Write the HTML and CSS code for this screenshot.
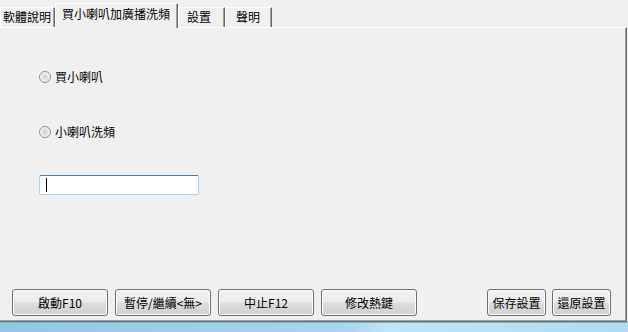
FILE: index.html
```html
<!DOCTYPE html>
<html lang="zh-Hant">
<head>
    <meta charset="UTF-8">
    <title>買小喇叭加廣播洗頻</title>
    <link rel="stylesheet" href="styles.css">
</head>
<body>
    <div class="window">
        <div class="tabs">
            <div class="tab tab-help">軟體說明</div>
            <div class="tab tab-main active">買小喇叭加廣播洗頻</div>
            <div class="tab tab-set">設置</div>
            <div class="tab tab-note">聲明</div>
        </div>
        <div class="panel">
            <div class="options">
                <label class="option"><span class="radio"></span>買小喇叭</label>
                <label class="option"><span class="radio"></span>小喇叭洗頻</label>
                <div class="textbox"><span class="caret"></span></div>
            </div>
            <div class="actions">
                <button class="btn wide">啟動F10</button>
                <button class="btn wide">暫停/繼續&lt;無&gt;</button>
                <button class="btn wide">中止F12</button>
                <button class="btn wide">修改熱鍵</button>
                <span class="spacer"></span>
                <button class="btn small">保存設置</button>
                <button class="btn small">還原設置</button>
            </div>
        </div>
        <div class="taskbar"></div>
    </div>
</body>
</html>
```

FILE: styles.css
```css
body {
    margin: 0;
    background: #f0f0f0;
    font-family: "Noto Sans CJK TC", "Liberation Sans", sans-serif;
    font-size: 12px;
    color: #000;
}
.window {
    width: 628px;
    height: 332px;
    display: flex;
    flex-direction: column;
    overflow: hidden;
}
.tabs {
    height: 27px;
    display: flex;
    align-items: flex-end;
}
.tab {
    box-sizing: border-box;
    height: 20px;
    line-height: 18px;
    border-top: 1px solid #fff;
    border-left: 1px solid #fff;
    border-right: 1px solid #696969;
    box-shadow: inset -1px 0 #a0a0a0;
    white-space: nowrap;
}
.tab.active {
    height: 25px;
    line-height: 20px;
    background: #f0f0f0;
    margin-bottom: -1px;
    position: relative;
}
.tab-help { width: 55px; padding-left: 2px; }
.tab-main { width: 123px; padding-left: 6px; }
.tab-set { width: 47px; padding-left: 8px; }
.tab-note { width: 47px; padding-left: 10px; }
.panel {
    box-sizing: border-box;
    width: 627px;
    height: 295px;
    border-top: 1px solid #fff;
    border-right: 1px solid #696969;
    border-bottom: 1px solid #696969;
    box-shadow: inset -1px -1px #a0a0a0;
    display: flex;
    flex-direction: column;
}
.options {
    padding: 42px 0 0 39px;
    display: flex;
    flex-direction: column;
    align-items: flex-start;
}
.option {
    display: flex;
    align-items: center;
    gap: 4px;
    height: 13px;
    line-height: 13px;
}
.option + .option {
    margin-top: 42px;
}
.radio {
    box-sizing: border-box;
    width: 12px;
    height: 12px;
    border: 1px solid #8e8f8f;
    border-radius: 50%;
    background: radial-gradient(circle, #cfcfcf 0, #e6e6e6 45%, #f6f6f6 80%);
    box-shadow: inset 0 0 0 1px #f4f4f4;
}
.textbox {
    box-sizing: border-box;
    margin-top: 37px;
    width: 160px;
    height: 20px;
    background: #fff;
    border: 1px solid #a9d1ef;
    border-top-color: #3c7fb1;
    border-radius: 2px;
    padding: 2px 0 0 6px;
}
.caret {
    display: block;
    width: 1px;
    height: 14px;
    background: #000;
}
.actions {
    margin-top: auto;
    padding: 0 15px 5px 12px;
    display: flex;
    gap: 7px;
}
.spacer {
    flex: 1;
}
.btn {
    box-sizing: border-box;
    height: 27px;
    padding: 0;
    font-family: inherit;
    font-size: 12px;
    color: #000;
    border: 1px solid #707070;
    border-radius: 3px;
    background: linear-gradient(#f2f2f2 0%, #ebebeb 48%, #dddddd 52%, #cfcfcf 100%);
    box-shadow: inset 0 0 0 1px #fcfcfc;
}
.btn.wide {
    width: 96px;
}
.btn.small {
    width: 59px;
}
.btn.small + .btn.small {
    margin-left: -1px;
}
.taskbar {
    flex: 1;
    background: linear-gradient(100deg, #8fc8e2 0%, #a8d6ec 55%, #c3e4f2 62%, #b1dbef 100%);
    border-top: 1px solid #7fb6d0;
}
```
